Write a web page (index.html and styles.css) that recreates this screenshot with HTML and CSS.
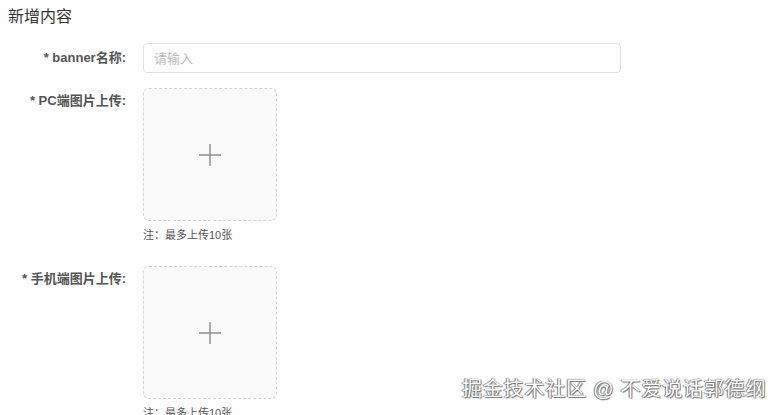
FILE: index.html
```html
<!DOCTYPE html>
<html lang="zh-CN">
<head>
<meta charset="utf-8">
<title>新增内容</title>
<link rel="stylesheet" href="styles.css">
</head>
<body>
<div class="page">
  <h1 class="title">新增内容</h1>
  <form class="form">
    <div class="item item-center">
      <label class="label">* banner名称:</label>
      <div class="control">
        <input class="input" type="text" placeholder="请输入">
      </div>
    </div>
    <div class="item">
      <label class="label">* PC端图片上传:</label>
      <div class="control">
        <div class="upload">
          <svg class="plus" width="22" height="22" viewBox="0 0 22 22"><path d="M0 11H22M11 0V22" stroke="#8c8c8c" stroke-width="1.4" fill="none"/></svg>
        </div>
        <div class="note">注：最多上传10张</div>
      </div>
    </div>
    <div class="item">
      <label class="label">* 手机端图片上传:</label>
      <div class="control">
        <div class="upload">
          <svg class="plus" width="22" height="22" viewBox="0 0 22 22"><path d="M0 11H22M11 0V22" stroke="#8c8c8c" stroke-width="1.4" fill="none"/></svg>
        </div>
        <div class="note">注：最多上传10张</div>
      </div>
    </div>
  </form>
  <div class="watermark">掘金技术社区 @ 不爱说话郭德纲</div>
</div>
</body>
</html>
```
FILE: styles.css
```css
html, body {
  margin: 0;
  padding: 0;
  background: #fff;
  overflow: hidden;
}
body {
  font-family: "Liberation Sans", "Noto Sans CJK SC", sans-serif;
  color: #333;
}
.page {
  position: relative;
  width: 779px;
  height: 415px;
  padding: 6px 0 0 8px;
  box-sizing: border-box;
}
.title {
  margin: 0;
  font-size: 16px;
  line-height: 22px;
  font-weight: normal;
  color: #333;
}
.form {
  margin-top: 15px;
  display: flex;
  flex-direction: column;
}
.item {
  display: flex;
  align-items: flex-start;
  gap: 17px;
  margin-bottom: 15px;
}
.item + .item {
  margin-bottom: 23px;
}
.item-center {
  align-items: center;
}
.label {
  width: 118px;
  text-align: right;
  font-size: 13px;
  line-height: 26px;
  font-weight: bold;
  color: #555;
  flex: none;
}
.control {
  display: flex;
  flex-direction: column;
}
.input {
  width: 478px;
  height: 30px;
  box-sizing: border-box;
  border: 1px solid #e2e2e2;
  border-radius: 4px;
  padding: 0 10px;
  font-family: "Liberation Sans", "Noto Sans CJK SC", sans-serif;
  font-size: 13px;
  color: #333;
  outline: none;
}
.input::placeholder {
  color: #bbb;
}
.upload {
  width: 134px;
  height: 133px;
  box-sizing: border-box;
  border: 1px dashed #d6d6d6;
  border-radius: 6px;
  background: #fafafa;
  display: flex;
  align-items: center;
  justify-content: center;
}
.note {
  margin-top: 6px;
  font-size: 11px;
  line-height: 16px;
  color: #555;
}
.watermark {
  position: absolute;
  left: 462px;
  top: 376px;
  font-size: 20px;
  line-height: 26px;
  letter-spacing: 0.8px;
  color: #fff;
  white-space: nowrap;
  text-shadow: 0 0 1px #555, 1px 1px 1px #777, -1px 0 1px #888;
}
```
